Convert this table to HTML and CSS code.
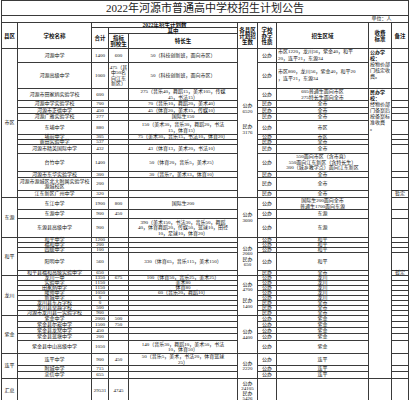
FILE: index.html
```html
<!DOCTYPE html>
<html lang="zh">
<head>
<meta charset="utf-8">
<title>2022年河源市普通高中学校招生计划公告</title>
<link rel="stylesheet" href="styles.css">
</head>
<body>
<table class="sheet">
<colgroup>
<col class="c-area"><col class="c-name"><col class="c-total"><col class="c-quota"><col class="c-special"><col class="c-county"><col class="c-type"><col class="c-region"><col class="c-fee"><col class="c-note">
</colgroup>
<tbody>
<tr class="h15"><td colspan="10" class="title">2022年河源市普通高中学校招生计划公告</td></tr>
<tr class="h7"><td colspan="8" class="blank"></td><td colspan="2" class="unit">单位：人</td></tr>
<tr class="h5">
<td rowspan="3" class="hd">县区</td>
<td rowspan="3" class="hd">学校名称</td>
<td colspan="3" class="hd">2022年招生计划数</td>
<td rowspan="3" class="hd ml">各县区<br>计划招<br>生数</td>
<td rowspan="3" class="hd ml">学校<br>办学<br>性质</td>
<td rowspan="3" class="hd">招生区域</td>
<td rowspan="3" class="hd ml">收费<br>标准</td>
<td rowspan="3" class="hd">备注</td>
</tr>
<tr class="h6"><td rowspan="2" class="hd">合计</td><td colspan="2" class="hd">其中</td></tr>
<tr class="h15"><td class="hd ml">指标<br>到校生</td><td class="hd">特长生</td></tr>

<tr class="h13"><td rowspan="14">市区</td><td>河源中学</td><td>1400</td><td>600</td><td>50（科技创新班，面向市区）</td>
<td rowspan="14" class="county-city"><span>公办<br>6520</span><span>民办<br>3176</span></td>
<td>公办</td><td class="left ml7">市区1220，龙川56，紫金40，和平<br>20，连平21，东源34</td>
<td rowspan="2" class="fee"><b>公办学<br>校：</b><br>按物价部<br>门核定收<br>费。</td><td></td></tr>
<tr class="h26"><td>河源高级中学</td><td>1060</td><td class="ml">475（其<br>中50名<br>向江东<br>新区）</td><td>50（科技创新班，面向市区）</td><td>公办</td><td class="left ml7">市区800，龙川56，紫金40，和平20<br>，连平21，东源34</td><td></td></tr>
<tr class="h10"><td>河源市田家炳实验学校</td><td>600</td><td></td><td class="ml">275（音乐40，舞蹈15，美术105，传媒<br>45，书法15）</td><td>公办</td><td class="ml">605普通生面向市区<br>275特长生面向全市</td>
<td rowspan="36" class="fee"><b>民办学<br>校：</b><br>经物价部<br>门备案后<br>按备案标<br>准收费<br>。</td><td></td></tr>
<tr class="h7"><td>河源中学实验学校</td><td>700</td><td></td><td>70（音乐10，舞蹈20，美术40）</td><td>民办</td><td>全市</td><td></td></tr>
<tr class="h6"><td>河源市正德中学</td><td>450</td><td></td><td>45（体育20，美术15，传媒10）</td><td>民办</td><td>全市</td><td></td></tr>
<tr class="h7"><td>河源广雅实验学校</td><td>277</td><td></td><td>国际生150</td><td>民办</td><td>全市</td><td></td></tr>
<tr class="h14"><td>东埔中学</td><td>880</td><td></td><td class="ml">150（美术30，音乐30，舞蹈20，书法<br>15，体育15）</td><td>公办</td><td>市区</td><td></td></tr>
<tr class="h5"><td>埔前中学</td><td>305</td><td></td><td>75（美术30，音乐15，书法10，体育20）</td><td>公办</td><td>市区</td><td></td></tr>
<tr class="h5"><td>黄田实验中学</td><td>537</td><td></td><td></td><td>民办</td><td>全市</td><td></td></tr>
<tr class="h9"><td>河源市精英国际中学</td><td>432</td><td></td><td>43（体育13，美术20，书法10）</td><td>民办</td><td>全市</td><td></td></tr>
<tr class="h18"><td>台竹中学</td><td>1400</td><td></td><td>50（体育20，音乐5，美术25）</td><td>公办</td><td class="ml">550面向市区（含市直）<br>550面向江东新区（含特长生）<br>300（城乡教学点）面向江东新区</td><td></td></tr>
<tr class="h6"><td>河源市东华实验学校</td><td>300</td><td></td><td>30（音乐7，美术13，体育10）</td><td>民办</td><td>全市</td><td></td></tr>
<tr class="h13"><td class="ml">河源市源城区北大附属实验学校<br>源城校区</td><td>200</td><td></td><td></td><td>民办</td><td>全市</td><td></td></tr>
<tr class="h7"><td>江东新区广州中学</td><td>320</td><td></td><td></td><td>民办</td><td>全市</td><td>暂定</td></tr>

<tr class="h10"><td rowspan="3">东源</td><td>东江中学</td><td>1900</td><td>800</td><td>国际生200</td>
<td rowspan="3" class="ml">公办<br>3600</td><td>公办</td><td class="ml">国际生200面向全市<br>普通生1700面向东源</td><td></td></tr>
<tr class="h9"><td>东源中学</td><td>900</td><td>450</td><td></td><td>公办</td><td>东源</td><td></td></tr>
<tr class="h19"><td>东源县高级中学</td><td>900</td><td></td><td class="ml">390（美术150，书法30，音乐50，舞蹈<br>40，体育舞蹈20，传媒50，篮球10，田径<br>10，足球10，体育20）</td><td>公办</td><td>东源</td><td></td></tr>

<tr class="h5"><td rowspan="5">和平</td><td>和平中学</td><td>1200</td><td></td><td></td>
<td rowspan="5" class="ml">公办<br>2060<br>民办<br>650</td><td>公办</td><td>和平</td><td></td></tr>
<tr class="h5"><td>福和中学</td><td>200</td><td></td><td></td><td>公办</td><td>和平</td><td></td></tr>
<tr class="h5"><td>四联中学</td><td>100</td><td></td><td></td><td>公办</td><td>和平</td><td></td></tr>
<tr class="h18"><td>阳明中学</td><td>560</td><td></td><td>330（体育65，音乐115，美术150）</td><td>公办</td><td>和平</td><td></td></tr>
<tr class="h5"><td>和平县福和高级实验中学</td><td>650</td><td></td><td></td><td>民办</td><td>全市</td><td>暂定</td></tr>

<tr class="h5"><td rowspan="8">龙川</td><td>龙川一中</td><td>1350</td><td>675</td><td>100（体育50，音乐25，美术25）</td>
<td rowspan="8" class="ml">公办<br>4700<br><br>民办<br>1400</td><td>公办</td><td>龙川</td><td></td></tr>
<tr class="h5"><td>实验中学</td><td>1150</td><td></td><td>美术80</td><td>公办</td><td>龙川</td><td></td></tr>
<tr class="h5"><td>田家炳中学</td><td>1150</td><td></td><td>体育80</td><td>公办</td><td>龙川</td><td></td></tr>
<tr class="h5"><td>隆师中学</td><td>1050</td><td></td><td>60（音乐20，舞蹈10）</td><td>公办</td><td>龙川</td><td></td></tr>
<tr class="h5"><td>新城中学</td><td>0</td><td></td><td></td><td>公办</td><td>龙川</td><td></td></tr>
<tr class="h5"><td>龙川县东方学校</td><td>0</td><td></td><td></td><td>民办</td><td>全市</td><td></td></tr>
<tr class="h5"><td>龙川县卓越学校</td><td>500</td><td></td><td></td><td>民办</td><td>全市</td><td></td></tr>
<tr class="h5"><td>河源市龙川县一实验学校</td><td>900</td><td></td><td></td><td>民办</td><td>全市</td><td></td></tr>

<tr class="h6"><td rowspan="5">紫金</td><td>紫金中学</td><td>2000</td><td>500</td><td></td>
<td rowspan="5" class="ml">公办<br>4400</td><td>公办</td><td>紫金</td><td></td></tr>
<tr class="h6"><td>紫金县尔崧中学</td><td>1500</td><td>750</td><td></td><td>公办</td><td>紫金</td><td></td></tr>
<tr class="h6"><td>紫金县龙窝中学</td><td>450</td><td></td><td></td><td>公办</td><td>紫金</td><td></td></tr>
<tr class="h7"><td>紫金县蓝塘中学</td><td>200</td><td></td><td></td><td>公办</td><td>紫金</td><td></td></tr>
<tr class="h13"><td>紫金县中山高级中学</td><td>1050</td><td></td><td class="ml">140（音乐30，舞蹈10，美术50，书法<br>10，体育50）</td><td>公办</td><td>紫金</td><td></td></tr>

<tr class="h12"><td rowspan="3">连平</td><td>连平中学</td><td>900</td><td>450</td><td class="ml">50（音乐5，美术，书法20，体育篮球<br>25）</td>
<td rowspan="3" class="ml">公办<br>2220</td><td>公办</td><td>连平</td><td></td></tr>
<tr class="h6"><td>附城中学</td><td>715</td><td></td><td></td><td>公办</td><td>连平</td><td></td></tr>
<tr class="h7"><td>忠信中学</td><td>655</td><td></td><td></td><td>公办</td><td>连平</td><td></td></tr>

<tr class="h25"><td>汇总</td><td></td><td>29531</td><td>4745</td><td></td><td class="total-county">公办<br>24105<br>民办<br>5426</td><td></td><td></td><td></td><td></td></tr>
</tbody>
</table>
</body>
</html>
```
FILE: styles.css
```css
* { box-sizing: border-box; }
html, body { margin: 0; padding: 0; background: #fff; }
body {
  font-family: "Liberation Serif", "Noto Sans CJK SC", serif;
  color: #111;
}
.sheet {
  width: 407px;
  margin-left: 1px;
  border-collapse: collapse;
  table-layout: fixed;
}
.c-area { width: 16px; }
.c-name { width: 74px; }
.c-total { width: 17px; }
.c-quota { width: 20px; }
.c-special { width: 109px; }
.c-county { width: 20px; }
.c-type { width: 19px; }
.c-region { width: 92px; }
.c-fee { width: 23px; }
.c-note { width: 17px; }

.sheet td {
  border: 1px solid #3a3a3a;
  padding: 0;
  font-size: 5px;
  line-height: 4px;
  text-align: center;
  vertical-align: middle;
  white-space: nowrap;
}
.sheet td.ml { line-height: 5.5px; }
.sheet td.ml7 { line-height: 6.5px; }
.sheet td.left { text-align: left; padding-left: 1px; }

.sheet td.title {
  font-size: 11px;
  line-height: 13px;
  color: #222;
}
.sheet td.blank { border-right: none; }
.sheet td.unit { text-align: left; padding-left: 3px; border-left: none; }
.sheet td.hd { font-weight: bold; font-size: 5.5px; }
.sheet td.hd.ml { line-height: 6px; }

.sheet td.county-city { line-height: 6px; padding-bottom: 8px; }
.county-city span { display: block; }
.county-city span + span { margin-top: 9px; }

.sheet td.total-county { line-height: 5px; vertical-align: top; padding-top: 2px; }

.sheet td.fee {
  vertical-align: top;
  text-align: left;
  line-height: 6px;
  padding: 1px 0 0 1px;
  white-space: normal;
}

.h5 { height: 5px; }
.h6 { height: 6px; }
.h7 { height: 7px; }
.h9 { height: 9px; }
.h10 { height: 10px; }
.h12 { height: 12px; }
.h13 { height: 13px; }
.h14 { height: 14px; }
.h15 { height: 15px; }
.h18 { height: 18px; }
.h19 { height: 19px; }
.h25 { height: 25px; }
.h26 { height: 26px; }
```
